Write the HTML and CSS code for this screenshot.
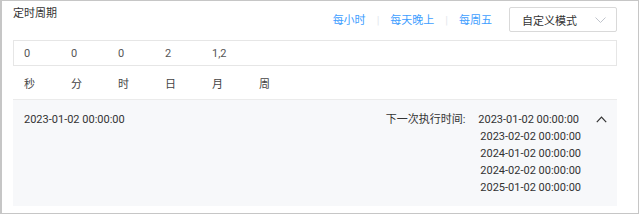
FILE: index.html
```html
<!DOCTYPE html>
<html lang="zh-CN">
  <head>
    <meta charset="UTF-8" />
    <meta name="viewport" content="width=device-width, initial-scale=1.0" />
    <title>定时周期</title>
    <link rel="stylesheet" href="styles.css">
  </head>
  <body>
    <div class="cron">
      <!-- Header: title + quick presets -->
      <div class="cron-head">
        <div class="cron-title">定时周期</div>
        <div class="cron-tools">
          <a class="preset">每小时</a>
          <span class="sep">|</span>
          <a class="preset">每天晚上</a>
          <span class="sep">|</span>
          <a class="preset">每周五</a>
          <div class="mode-select">
            <span>自定义模式</span>
            <svg class="arrow" width="11" height="6" viewBox="0 0 11 6">
              <path d="M0.5 0.5 L5.5 5.5 L10.5 0.5" fill="none" stroke="#c0c4cc" stroke-width="1" />
            </svg>
          </div>
        </div>
      </div>

      <!-- Expression values -->
      <div class="cron-values">
        <span>0</span>
        <span>0</span>
        <span>0</span>
        <span>2</span>
        <span>1,2</span>
        <span></span>
      </div>

      <!-- Field labels -->
      <div class="cron-labels">
        <span>秒</span>
        <span>分</span>
        <span>时</span>
        <span>日</span>
        <span>月</span>
        <span>周</span>
      </div>

      <!-- Next run times -->
      <div class="cron-result">
        <div class="start-time">2023-01-02 00:00:00</div>
        <div class="next-runs">
          <div class="next-label">下一次执行时间:</div>
          <div class="next-list">
            <div class="first">2023-01-02 00:00:00</div>
            <div>2023-02-02 00:00:00</div>
            <div>2024-01-02 00:00:00</div>
            <div>2024-02-02 00:00:00</div>
            <div>2025-01-02 00:00:00</div>
          </div>
          <svg class="collapse" width="11" height="7" viewBox="0 0 11 7">
            <path d="M0.8 6.2 L5.5 1.2 L10.2 6.2" fill="none" stroke="#333" stroke-width="1.2" />
          </svg>
        </div>
      </div>
    </div>
  </body>
</html>
```

FILE: styles.css
```css
* {
  margin: 0;
  padding: 0;
  box-sizing: border-box;
}

body {
  background-color: #ffffff;
  font-family: Roboto, "Noto Sans CJK SC", sans-serif;
  font-size: 11px;
  color: #333;
}

.cron {
  width: 639px;
  height: 214px;
  border: 1px solid #c6c6c6;
  border-left-width: 2px;
  padding: 6px 21px 0 11px;
}

.cron-head {
  display: flex;
  justify-content: space-between;
  align-items: flex-start;
  height: 25px;
}

.cron-title {
  line-height: 14px;
  color: #333;
}

.cron-tools {
  display: flex;
  align-items: center;
  height: 25px;
}

.preset {
  color: #409eff;
  cursor: pointer;
  line-height: 14px;
  margin-top: 2px;
}

.sep {
  color: #e4e7ed;
  margin: 2px 11px 0 11px;
  font-size: 11px;
}

.mode-select {
  display: flex;
  justify-content: space-between;
  align-items: center;
  width: 108px;
  height: 25px;
  margin-left: 17px;
  padding: 0 10px 0 12px;
  border: 1px solid #d9d9d9;
  border-radius: 2px;
  color: #333;
}

.cron-values {
  display: flex;
  align-items: center;
  height: 26px;
  margin-top: 8px;
  padding-left: 10px;
  border: 1px solid #e6e6e6;
  color: #555;
}

.cron-values span,
.cron-labels span {
  width: 47px;
}

.cron-labels {
  display: flex;
  height: 33px;
  padding: 10px 0 0 11px;
  line-height: 17px;
  color: #444;
}

.cron-result {
  display: flex;
  justify-content: space-between;
  height: 107px;
  padding: 11px 10px 0 11px;
  background-color: #f7f8fa;
  border-top: 1px solid #ebebeb;
  line-height: 17px;
}

.next-runs {
  display: flex;
  align-items: flex-start;
}

.next-label {
  margin-right: 13px;
}

.next-list {
  text-align: right;
}

.next-list .first {
  margin-right: 2px;
}

.collapse {
  margin: 5px 0 0 15px;
}
```
